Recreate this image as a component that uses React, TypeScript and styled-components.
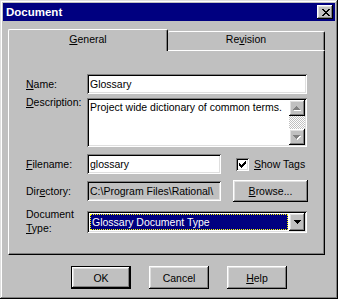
import styled, { createGlobalStyle, css } from 'styled-components';

const GlobalStyle = createGlobalStyle`
  html, body {
    margin: 0;
    padding: 0;
    background: #c0c0c0;
  }
  body {
    font-family: 'Liberation Sans', Arial, sans-serif;
    font-size: 10.5px;
    color: #000;
  }
`;

// tiny pixel-art icons (close X, arrows, check)
const CLOSE_X = [
  'XX....XX',
  '.XX..XX.',
  '..XXXX..',
  '...XX...',
  '..XXXX..',
  '.XX..XX.',
  'XX....XX',
];
const ARROW_UP = ['...X...', '..XXX..', '.XXXXX.', 'XXXXXXX'];
const ARROW_DOWN = ['XXXXXXX', '.XXXXX.', '..XXX..', '...X...'];
const CHECK = [
  '......X',
  '.....XX',
  'X...XXX',
  'XX.XXX.',
  'XXXXX..',
  '.XXX...',
  '..X....',
];

const PixelIcon = ({ rows, color, shadow }: { rows: string[]; color: string; shadow?: string }) => {
  const w = rows[0].length + (shadow ? 1 : 0);
  const h = rows.length + (shadow ? 1 : 0);
  const cells = (dx: number, fill: string) =>
    rows.flatMap((row, y) =>
      row.split('').map((c, x) =>
        c === 'X' ? <rect key={`${fill}-${x}-${y}`} x={x + dx} y={y + dx} width={1} height={1} fill={fill} /> : null,
      ),
    );
  return (
    <svg width={w} height={h} viewBox={`0 0 ${w} ${h}`} shapeRendering='crispEdges'>
      {shadow && cells(1, shadow)}
      {cells(0, color)}
    </svg>
  );
};

const raised = css`
  background: #c0c0c0;
  box-shadow: inset -1px -1px #000, inset 1px 1px #fff, inset -2px -2px #808080, inset 2px 2px #dfdfdf;
`;

const sunken = css`
  box-shadow: inset 1px 1px #808080, inset -1px -1px #fff, inset 2px 2px #000, inset -2px -2px #dfdfdf;
`;

export default function App() {
  return (
    <>
      <GlobalStyle />
      <Window>
        <TitleBar>
          <Title>Document</Title>
          <CloseButton>
            <PixelIcon rows={CLOSE_X} color='#000' />
          </CloseButton>
        </TitleBar>

        <Body>
          <TabStrip>
            <Tab $active>
              <u>G</u>eneral
            </Tab>
            <Tab>
              Re<u>v</u>ision
            </Tab>
          </TabStrip>

          <Panel>
            <Row>
              <Label>
                <u>N</u>ame:
              </Label>
              <TextField $w={220} value='Glossary' readOnly />
            </Row>

            <Row $mt={4} $top>
              <Label $offset={-2}>
                <u>D</u>escription:
              </Label>
              <TextArea>
                <TextContent>Project wide dictionary of common terms.</TextContent>
                <ScrollBar>
                  <ScrollButton>
                    <PixelIcon rows={ARROW_UP} color='#808080' shadow='#fff' />
                  </ScrollButton>
                  <ScrollTrack />
                  <ScrollButton>
                    <PixelIcon rows={ARROW_DOWN} color='#808080' shadow='#fff' />
                  </ScrollButton>
                </ScrollBar>
              </TextArea>
            </Row>

            <Row $mt={7}>
              <Label>
                <u>F</u>ilename:
              </Label>
              <TextField $w={134} value='glossary' readOnly />
              <CheckGroup>
                <CheckBox>
                  <PixelIcon rows={CHECK} color='#000' />
                </CheckBox>
                <span>
                  <u>S</u>how Tags
                </span>
              </CheckGroup>
            </Row>

            <Row $mt={6}>
              <Label>
                Dir<u>e</u>ctory:
              </Label>
              <TextField $w={134} $disabled value='C:\Program Files\Rational\' readOnly />
              <Button $w={75} $h={22} $ml={12}>
                <u>B</u>rowse...
              </Button>
            </Row>

            <Row $mt={9} $top>
              <Label $offset={-4} $lh={14}>
                Document
                <br />
                <u>T</u>ype:
              </Label>
              <Select>
                <Selected>Glossary Document Type</Selected>
                <DropButton>
                  <PixelIcon rows={ARROW_DOWN} color='#000' />
                </DropButton>
              </Select>
            </Row>
          </Panel>

          <ButtonRow>
            <Button $default>OK</Button>
            <Button>Cancel</Button>
            <Button>
              <u>H</u>elp
            </Button>
          </ButtonRow>
        </Body>
      </Window>
    </>
  );
}

// WINDOW
const Window = styled.div`
  width: 338px;
  height: 299px;
  box-sizing: border-box;
  padding: 3px;
  background: #c0c0c0;
  box-shadow: inset -1px -1px #000, inset 1px 1px #dfdfdf, inset -2px -2px #808080, inset 2px 2px #fff;
  display: flex;
  flex-direction: column;
`;

const TitleBar = styled.div`
  height: 18px;
  background: #000080;
  display: flex;
  align-items: center;
  justify-content: space-between;
  padding: 0 2px 0 3px;
`;

const Title = styled.span`
  color: #fff;
  font-weight: bold;
  font-size: 11.5px;
`;

const CloseButton = styled.div`
  ${raised};
  width: 16px;
  height: 14px;
  display: flex;
  align-items: center;
  justify-content: center;
  padding-left: 1px;
  box-sizing: border-box;
`;

const Body = styled.div`
  display: flex;
  flex-direction: column;
  padding: 8px 0 0 5px;
`;

// TABS
const TabStrip = styled.div`
  display: flex;
  align-items: flex-end;
  height: 22px;
`;

const Tab = styled.div<{ $active?: boolean }>`
  box-sizing: border-box;
  text-align: center;
  line-height: 13px;
  border-top: 1px solid #fff;
  border-right: 1px solid #000;
  box-shadow: inset -1px 0 #808080;
  border-radius: 2px 2px 0 0;

  ${({ $active }) =>
    $active
      ? css`
          width: 160px;
          height: 22px;
          border-left: 1px solid #fff;
          padding-top: 3px;
        `
      : css`
          width: 157px;
          height: 20px;
          border-bottom: 1px solid #fff;
          padding-top: 1px;
        `}
`;

const Panel = styled.div`
  width: 317px;
  height: 204px;
  box-sizing: border-box;
  border-left: 1px solid #fff;
  border-right: 1px solid #000;
  border-bottom: 1px solid #000;
  box-shadow: inset -1px -1px #808080;
  padding: 23px 0 0 17px;
  display: flex;
  flex-direction: column;
`;

// FORM
const Row = styled.div<{ $mt?: number; $top?: boolean }>`
  display: flex;
  align-items: ${({ $top }) => ($top ? 'flex-start' : 'center')};
  margin-top: ${({ $mt = 0 }) => $mt}px;
`;

const Label = styled.div<{ $offset?: number; $lh?: number }>`
  width: 61px;
  flex-shrink: 0;
  line-height: ${({ $lh = 13 }) => $lh}px;
  margin-top: ${({ $offset = 0 }) => $offset}px;
`;

const TextField = styled.input<{ $w: number; $disabled?: boolean }>`
  ${sunken};
  width: ${({ $w }) => $w}px;
  height: 20px;
  box-sizing: border-box;
  border: none;
  outline: none;
  margin: 0;
  padding: 0 3px;
  font: inherit;
  color: #000;
  background: ${({ $disabled }) => ($disabled ? '#c0c0c0' : '#fff')};
`;

const TextArea = styled.div`
  ${sunken};
  width: 220px;
  height: 49px;
  box-sizing: border-box;
  padding: 2px;
  background: #fff;
  display: flex;
`;

const TextContent = styled.div`
  flex: 1;
  padding: 1px 1px 0;
  line-height: 13px;
  white-space: nowrap;
  overflow: hidden;
`;

const ScrollBar = styled.div`
  width: 16px;
  display: flex;
  flex-direction: column;
`;

const ScrollButton = styled.div`
  ${raised};
  width: 16px;
  height: 16px;
  display: flex;
  align-items: center;
  justify-content: center;
`;

const ScrollTrack = styled.div`
  flex: 1;
  background: repeating-conic-gradient(#c0c0c0 0 25%, #fff 0 50%) 0 0 / 2px 2px;
`;

const CheckGroup = styled.div`
  display: flex;
  align-items: center;
  gap: 5px;
  margin-left: 15px;
`;

const CheckBox = styled.div`
  ${sunken};
  width: 13px;
  height: 13px;
  box-sizing: border-box;
  background: #fff;
  display: flex;
  align-items: center;
  justify-content: center;
`;

const Select = styled.div`
  ${sunken};
  width: 220px;
  height: 22px;
  box-sizing: border-box;
  padding: 2px;
  background: #fff;
  display: flex;
`;

const Selected = styled.div`
  flex: 1;
  margin: 1px;
  padding-left: 2px;
  background: #000080;
  color: #fff;
  outline: 1px dotted #ffff00;
  outline-offset: -1px;
  display: flex;
  align-items: center;
  white-space: nowrap;
`;

const DropButton = styled.div`
  ${raised};
  width: 16px;
  display: flex;
  align-items: center;
  justify-content: center;
`;

// BUTTONS
const ButtonRow = styled.div`
  display: flex;
  gap: 18px;
  margin-top: 11px;
  padding-left: 63px;
`;

const Button = styled.button<{ $w?: number; $h?: number; $ml?: number; $default?: boolean }>`
  ${raised};
  width: ${({ $w = 60 }) => $w}px;
  height: ${({ $h = 23 }) => $h}px;
  margin: 0 0 0 ${({ $ml = 0 }) => $ml}px;
  padding: 0;
  border: none;
  font: inherit;
  color: #000;
  flex-shrink: 0;

  ${({ $default }) =>
    $default &&
    css`
      box-shadow: inset 0 0 0 1px #000, inset -2px -2px #000, inset 2px 2px #fff, inset -3px -3px #808080,
        inset 3px 3px #dfdfdf;
    `}
`;
